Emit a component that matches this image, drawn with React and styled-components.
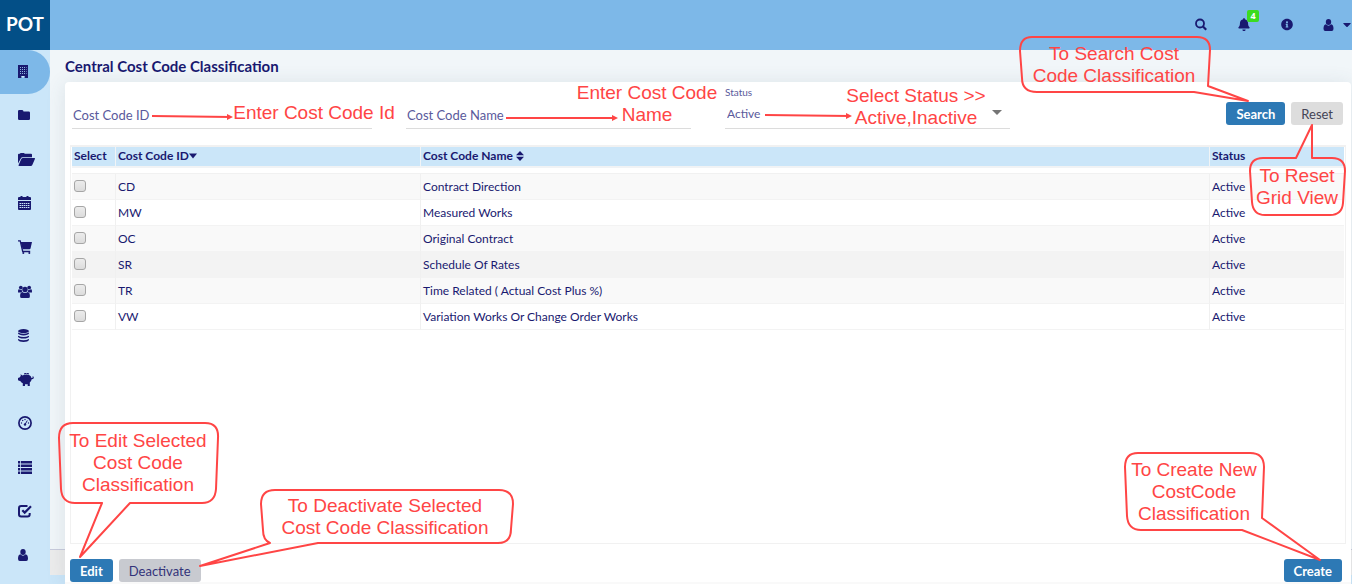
import React from "react";
import styled, { createGlobalStyle, css } from "styled-components";
import { FaBell, FaInfoCircle, FaCaretDown } from "react-icons/fa";

const navy = "#191970";
const red = "#ff4545";
const sky = "#cbe6f9";

const GlobalStyle = createGlobalStyle`
  *, *::before, *::after { box-sizing: border-box; }
  body {
    margin: 0;
    font-family: Lato, "Open Sans", sans-serif;
    font-size: 12px;
    color: ${navy};
  }
  button, input, select { font: inherit; color: inherit; }
`;

const Page = styled.div`
  position: relative;
  display: grid;
  grid-template-columns: 50px minmax(0, 1fr);
  grid-template-rows: 50px 1fr;
  min-height: 100vh;
  overflow: hidden;
`;

const Logo = styled.a`
  display: flex;
  align-items: center;
  justify-content: center;
  padding-bottom: 3px;
  background: #034f87;
  color: #fff;
  font-size: 19px;
  font-weight: 700;
  text-decoration: none;
`;

const TopBar = styled.header`
  display: flex;
  align-items: center;
  justify-content: flex-end;
  padding: 0 1px 1px 0;
  background: #7db8e8;
`;

const TopButton = styled.button`
  position: relative;
  display: flex;
  align-items: center;
  justify-content: center;
  gap: 9px;
  min-width: 43px;
  height: 30px;
  padding: 0;
  border: 0;
  background: none;
  cursor: pointer;
  svg { width: 12px; height: 13px; }
`;

const UserButton = styled(TopButton)`
  padding-left: 14px;
  svg:first-child { width: 11px; height: 12px; }
  svg:last-child { width: 8px; }
`;

const Badge = styled.span`
  position: absolute;
  top: 0;
  right: 6px;
  width: 12px;
  height: 12px;
  border-radius: 2px;
  background: #3bdc1f;
  color: #fff;
  font-family: "Open Sans", sans-serif;
  font-size: 9px;
  font-weight: 700;
  line-height: 11px;
  text-align: center;
`;

const SideNav = styled.nav`
  display: flex;
  flex-direction: column;
  background: ${sky};
`;

const SideLink = styled.a`
  display: flex;
  align-items: center;
  height: 44px;
  padding: 0 0 2px 18px;
  color: ${navy};
  border-radius: 0 22px 22px 0;
  ${(p) => p.$active && css`background: #7db8e8;`}
  svg { width: ${(p) => p.$w}px; height: ${(p) => p.$h}px; }
`;

const Main = styled.main`
  display: flex;
  flex-direction: column;
  padding: 0 1px 0 15px;
  background: linear-gradient(to top, ${sky} 9px, #ececec 9px, #ececec 34px, #c8cbdc 34px, #c8cbdc 35px, #f1f6f9 35px);
`;

const Title = styled.h1`
  margin: 0;
  height: 32px;
  font-size: 15px;
  font-weight: 700;
  line-height: 32px;
`;

const Card = styled.section`
  flex: 1;
  display: flex;
  flex-direction: column;
  border-bottom: 2px solid #f9f9f9;
  border-radius: 4px 4px 0 0;
  background: #fff;
  box-shadow: 0 2px 20px rgba(60, 80, 100, 0.12);
`;

const FilterBar = styled.form`
  display: flex;
  align-items: flex-start;
  justify-content: space-between;
  padding: 4px 8px 16px 7px;
`;

const Fields = styled.div`
  flex: 1;
  max-width: 938px;
  display: grid;
  grid-template-columns: 300fr 285fr 285fr;
  gap: 34px;
`;

const Field = styled.label`
  position: relative;
  display: flex;
  flex-direction: column;
  justify-content: flex-end;
  height: 43px;
  border-bottom: 1px solid #dcdcdc;
  color: #5a5a9c;
`;

const FieldLabel = styled.span`
  font-size: 10px;
  line-height: 12px;
  margin-bottom: 3px;
`;

const control = css`
  width: 100%;
  height: 26px;
  padding: 0 1px;
  border: 0;
  outline: 0;
  background: none;
  font-size: 13px;
  color: #5a5a9c;
`;

const TextInput = styled.input`
  ${control}
  &::placeholder { color: #5a5a9c; opacity: 1; }
`;

const Select = styled.select`
  ${control}
  height: 27px;
  padding: 0 2px 2px;
  font-size: 12px;
  appearance: none;
`;

const SelectArrow = styled.span`
  position: absolute;
  right: 8px;
  bottom: 13px;
  border: 5px solid transparent;
  border-top-color: #757575;
  border-bottom: 0;
  pointer-events: none;
`;

const ButtonGroup = styled.div`
  display: flex;
  gap: 6px;
`;

const FilterButtons = styled(ButtonGroup)`
  margin-top: 16px;
`;

const variants = {
  primary: css`background: #2d79b5; color: #fff; font-weight: 700;`,
  light: css`background: #dddddd; color: #444455;`,
  muted: css`background: #c8cad0; color: #33337a;`,
};

const Button = styled.button`
  height: 23px;
  padding: 0 10px;
  border: 0;
  border-radius: 3px;
  font-size: 13px;
  line-height: 22px;
  cursor: pointer;
  ${(p) => variants[p.$variant]}
`;

const GridBox = styled.div`
  flex: 1;
  margin: 0 5px 0 5px;
  border: 1px solid #f1f1f1;
  border-top-width: 2px;
`;

const Table = styled.table`
  width: 100%;
  table-layout: fixed;
  border-collapse: separate;
  border-spacing: 0;
  padding: 0 1px;
`;

const HeadCell = styled.th`
  height: 21px;
  padding: 0 2px 2px;
  border-right: 1px solid #f1f4f6;
  border-bottom: 2px solid #f1f3f5;
  background: ${sky};
  text-align: left;
  font-weight: 700;
  white-space: nowrap;
  width: ${(p) => p.$width || "auto"};
  &:last-child { border-right: 0; }
`;

const SortMark = styled.svg`
  width: 8px;
  height: 10px;
  vertical-align: -1px;
  ${(p) => p.$spaced && css`margin-left: 3px;`}
`;

const SpacerCell = styled.td`
  height: 6px;
  padding: 0;
  border-bottom: 1px solid #f1f1f1;
`;

const Row = styled.tr`
  background: ${(p) => (p.$hover ? "#f3f3f3" : p.$striped ? "#f9f9f9" : "#fff")};
`;

const Cell = styled.td`
  height: 26px;
  padding: 0 2px 1px;
  border-right: 1px solid #f0f0f0;
  border-bottom: 1px solid #f3f3f3;
  &:last-child { border-right: 0; }
`;

const Check = styled.input`
  appearance: none;
  display: block;
  width: 12px;
  height: 12px;
  margin: 0;
  border: 1px solid #a6a6a6;
  border-radius: 3px;
  background: linear-gradient(#ececec, #dcdcdc);
`;

const Actions = styled.footer`
  display: flex;
  justify-content: space-between;
  padding: 15px 9px 0 5px;
`;

const Note = styled.div`
  position: absolute;
  z-index: 2;
  ${(p) => (p.$right !== undefined ? `right: ${p.$right}px;` : `left: ${p.$left}px;`)}
  ${(p) => (p.$bottom !== undefined ? `bottom: ${p.$bottom}px;` : `top: ${p.$top}px;`)}
  width: ${(p) => p.$w}px;
  height: ${(p) => p.$h}px;
  pointer-events: none;
  svg { position: absolute; inset: 0; width: 100%; height: 100%; }
`;

const NoteText = styled.p`
  position: absolute;
  top: ${(p) => p.$y}px;
  left: ${(p) => p.$x}px;
  width: ${(p) => p.$w}px;
  margin: 0;
  color: ${red};
  font-family: "Liberation Sans", Arial, sans-serif;
  font-size: 19px;
  line-height: 22px;
  text-align: center;
  white-space: pre;
`;

const Building = () => (
  <svg viewBox="0 0 10 13" fill="currentColor" aria-hidden="true">
    <path d="M0 0h10v13H6.500v-2h-3v2H0z" />
    <path d="M2 2.500h6.500M2 4.500h6.500M2 6.500h6.500M2 8.500h6.500" stroke="#8fb4dd" strokeWidth="1" strokeDasharray="1 1" />
    <path d="M3.500 11h3v1.500h-3z" fill={sky} />
  </svg>
);
const Folder = () => (
  <svg viewBox="0 0 12 10" fill="currentColor" aria-hidden="true">
    <path d="M1.300 0h2.900q1.300 0 1.300 1.500h5.200Q12 1.500 12 2.800v5.900Q12 10 10.700 10H1.300Q0 10 0 8.700V1.300Q0 0 1.300 0z" />
  </svg>
);
const FolderOpen = () => (
  <svg viewBox="0 0 17 13" fill="currentColor" aria-hidden="true">
    <path d="M0 10.500V1.800Q0 .8 1 .8h1L2.500 0h3.500l.8.800H13q1 0 1 1v2.400H4.600q-1.300 0-1.800 1.200z" />
    <path d="M4.800 5H16.300q1 0 .6.900l-2.600 6.100q-.4 1-1.500 1H1.200q-1 0-.6-.9L3.300 6q.5-1 1.500-1z" />
  </svg>
);
const Calendar = () => (
  <svg viewBox="0 0 13 14" fill="currentColor" aria-hidden="true">
    <path d="M1 1h1.500V0h2v1h4V0h2v1H12q1 0 1 1v2H0V2q0-1 1-1zM0 5h13v8q0 1-1 1H1q-1 0-1-1z" />
    <path d="M1.500 7.500h10M1.500 9.500h10M1.500 11.500h10" stroke={sky} strokeWidth="1" strokeDasharray="1.500 .6" />
  </svg>
);
const Cart = () => (
  <svg viewBox="0 0 14 14" fill="currentColor" aria-hidden="true">
    <path d="M2.600 1.900H14l-1.500 6.600q-.2.800-1 .8H4.600z" />
    <path d="M0 .8h2.200l2.500 10.700h7.500" fill="none" stroke="currentColor" strokeWidth="1.300" />
    <circle cx="5.300" cy="13" r="1" /><circle cx="11.300" cy="13" r="1" />
  </svg>
);
const Group = () => (
  <svg viewBox="0 0 15 14" fill="currentColor" aria-hidden="true">
    <circle cx="3" cy="2.700" r="2" /><circle cx="12" cy="2.700" r="2" />
    <path d="M0 8V6.200Q0 4.600 1.200 4.600 3 5.600 4 5q0 1.300.6 2L3 8zM15 8V6.200Q15 4.600 13.800 4.600 12 5.600 11 5q0 1.300-.6 2L12 8z" />
    <circle cx="7.500" cy="4.900" r="2.900" />
    <path d="M4.500 7.600Q7.500 9.800 10.500 7.600 12.800 8.200 12.800 12 12.800 14 11 14H4Q2.200 14 2.200 12 2.200 8.200 4.500 7.600z" />
  </svg>
);
const Database = () => (
  <svg viewBox="0 0 12 14" fill="currentColor" aria-hidden="true">
    <ellipse cx="6" cy="2.200" rx="6" ry="2.200" />
    <path d="M0 3.700q6 3 12 0v1.200q-1 2-6 2t-6-2zM0 7.200q6 3 12 0v1.200q-1 2-6 2t-6-2zM0 10.700q6 3 12 0v1.200q-1 2.100-6 2.100t-6-2.100z" />
  </svg>
);
const Piggy = () => (
  <svg viewBox="0 0 16 13" fill="currentColor" aria-hidden="true">
    <path d="M2.500 1.300 4.600 2.500Q6 1.500 8.500 1.500q4.300 0 5 3.500.8.300 1-.3.200-.5-.2-.9l.8-.5q1 .9.600 1.900-.5 1-2 1-.3 1.900-1.900 3.200V13H9.700v-1.800H7V13H4.800V10.300Q3.300 9.500 2.500 8.200L0 7.200V5l1.900-.7q.2-.7.900-1.200z" />
    <path d="M6 .9Q8.500-.5 11 .9" fill="none" stroke="currentColor" strokeWidth="1" />
  </svg>
);
const Gauge = () => (
  <svg viewBox="0 0 14 14" fill="none" stroke="currentColor" aria-hidden="true">
    <circle cx="7" cy="7" r="6.100" strokeWidth="1.700" />
    <path d="M7 8.500 9.300 4.500" strokeWidth="1" />
    <g fill="currentColor" stroke="none">
      <circle cx="7" cy="8.500" r="1.200" /><circle cx="3.500" cy="7" r=".7" />
      <circle cx="4.700" cy="4.500" r=".7" /><circle cx="7" cy="3.500" r=".7" /><circle cx="10.500" cy="7" r=".7" />
    </g>
  </svg>
);
const List = () => (
  <svg viewBox="0 0 14 13" fill="currentColor" aria-hidden="true">
    <path d="M0 0h2.200v2.500H0zM3 0h11v2.500H3zM0 3.500h2.200V6H0zM3 3.500h11V6H3zM0 7h2.200v2.500H0zM3 7h11v2.500H3zM0 10.500h2.200V13H0zM3 10.500h11V13H3z" />
  </svg>
);
const Checked = () => (
  <svg viewBox="0 0 14 14" fill="none" stroke="currentColor" strokeWidth="2" aria-hidden="true">
    <path d="M9.500 2H3.200Q1 2 1 4.200v6Q1 12.500 3.200 12.500h6.300q2.200 0 2.200-2.300V9" />
    <path d="M4.300 6.200 6.700 8.600 13 2.300" strokeWidth="2.200" />
  </svg>
);
const User = () => (
  <svg viewBox="0 0 10 12" fill="currentColor" aria-hidden="true">
    <ellipse cx="5" cy="3" rx="2.700" ry="3" />
    <path d="M2.400 5.300Q5 8 7.600 5.300 10 5.600 10 9.800 10 12 8.200 12H1.800Q0 12 0 9.800 0 5.600 2.400 5.300z" />
  </svg>
);
const Magnifier = () => (
  <svg viewBox="0 0 12 12" fill="none" stroke="currentColor" aria-hidden="true">
    <circle cx="5" cy="5" r="4" strokeWidth="1.800" />
    <path d="M8 8 11.200 11.200" strokeWidth="2.200" />
  </svg>
);

const nav = [
  ["Buildings", Building, 10, 13],
  ["Files", Folder, 12, 10],
  ["Open files", FolderOpen, 17, 13],
  ["Calendar", Calendar, 13, 14],
  ["Purchasing", Cart, 14, 14],
  ["Teams", Group, 14, 13],
  ["Data", Database, 11, 13],
  ["Budget", Piggy, 16, 13],
  ["Dashboard", Gauge, 14, 14],
  ["Lists", List, 14, 13],
  ["Tasks", Checked, 14, 14],
  ["Account", User, 10, 12],
];

const rows = [
  ["CD", "Contract Direction"],
  ["MW", "Measured Works"],
  ["OC", "Original Contract"],
  ["SR", "Schedule Of Rates"],
  ["TR", "Time Related ( Actual Cost Plus %)"],
  ["VW", "Variation Works Or Change Order Works"],
];

function Callout({ box, path, text, textBox, ...pos }) {
  return (
    <Note $w={box[2]} $h={box[3]} {...pos}>
      <svg viewBox={box.join(" ")} fill="none" stroke={red} strokeWidth="2" strokeLinejoin="round" aria-hidden="true">
        <path d={path} />
      </svg>
      <NoteText $x={textBox[0]} $y={textBox[1]} $w={textBox[2]}>{text}</NoteText>
    </Note>
  );
}

function Pointer({ box, from, to, text, textBox, ...pos }) {
  return (
    <Note $w={box[2]} $h={box[3]} {...pos}>
      <svg viewBox={box.join(" ")} aria-hidden="true">
        <path d={`M${from}L${to}`} stroke={red} strokeWidth="2" />
        <path d={`M${to[0] + 2} ${to[1]}l-6-3v6z`} fill={red} />
      </svg>
      <NoteText $x={textBox[0]} $y={textBox[1]} $w={textBox[2]}>{text}</NoteText>
    </Note>
  );
}

export default function App() {
  return (
    <Page>
      <GlobalStyle />
      <Logo href="#">POT</Logo>
      <TopBar>
        <TopButton aria-label="Search"><Magnifier /></TopButton>
        <TopButton aria-label="Notifications"><FaBell /><Badge>4</Badge></TopButton>
        <TopButton aria-label="Information"><FaInfoCircle /></TopButton>
        <UserButton aria-label="Account menu"><User /><FaCaretDown /></UserButton>
      </TopBar>
      <SideNav aria-label="Modules">
        {nav.map(([label, Icon, w, h], i) => (
          <SideLink key={label} href="#" aria-label={label} $active={i === 0} $w={w} $h={h}><Icon /></SideLink>
        ))}
      </SideNav>
      <Main>
        <Title>Central Cost Code Classification</Title>
        <Card>
          <FilterBar onSubmit={(e) => e.preventDefault()}>
            <Fields>
              <Field><TextInput aria-label="Cost Code ID" placeholder="Cost Code ID" /></Field>
              <Field><TextInput aria-label="Cost Code Name" placeholder="Cost Code Name" /></Field>
              <Field>
                <FieldLabel>Status</FieldLabel>
                <Select defaultValue="Active"><option>Active</option><option>Inactive</option></Select>
                <SelectArrow />
              </Field>
            </Fields>
            <FilterButtons>
              <Button $variant="primary">Search</Button>
              <Button type="reset" $variant="light">Reset</Button>
            </FilterButtons>
          </FilterBar>
          <GridBox>
            <Table>
              <thead>
                <tr>
                  <HeadCell $width="44px">Select</HeadCell>
                  <HeadCell $width="305px">
                    Cost Code ID<SortMark viewBox="0 0 8 10" fill="currentColor" aria-hidden="true"><path d="M0 2.500h8L4 7.500z" /></SortMark>
                  </HeadCell>
                  <HeadCell>
                    Cost Code Name<SortMark $spaced viewBox="0 0 8 10" fill="currentColor" aria-hidden="true"><path d="M0 4.300h8L4 0zM0 5.700h8L4 10z" /></SortMark>
                  </HeadCell>
                  <HeadCell $width="134px">Status</HeadCell>
                </tr>
              </thead>
              <tbody>
                <tr><SpacerCell colSpan={4} /></tr>
                {rows.map(([id, name], i) => (
                  <Row key={id} $striped={i % 2 === 0} $hover={id === "SR"}>
                    <Cell><Check type="checkbox" aria-label={`Select ${id}`} /></Cell>
                    <Cell>{id}</Cell>
                    <Cell>{name}</Cell>
                    <Cell>Active</Cell>
                  </Row>
                ))}
              </tbody>
            </Table>
          </GridBox>
          <Actions>
            <ButtonGroup>
              <Button $variant="primary">Edit</Button>
              <Button $variant="muted">Deactivate</Button>
            </ButtonGroup>
            <Button $variant="primary">Create</Button>
          </Actions>
        </Card>
      </Main>

      <Pointer $left={150} $top={95} box={[150, 95, 250, 36]} from={[152, 116]} to={[231, 117]}
        text="Enter Cost Code Id" textBox={[82, 7, 164]} />
      <Pointer $left={504} $top={80} box={[504, 80, 216, 48]} from={[506, 118]} to={[616, 118]}
        text={"Enter Cost Code\nName"} textBox={[72, 2, 142]} />
      <Pointer $left={763} $top={80} box={[763, 80, 226, 50]} from={[765, 115]} to={[850, 116]}
        text={"Select Status >>\nActive,Inactive"} textBox={[82, 5, 142]} />
      <Callout $right={102} $top={34} box={[1018, 34, 232, 70]}
        path="M1032 37H1197Q1210 37 1210 50L1208 86L1248 101L1194 92H1037Q1022 92 1022 78L1020 51Q1020 37 1032 37Z"
        text={"To Search Cost\nCode Classification"} textBox={[5, 9, 182]} />
      <Callout $right={4} $top={122} box={[1248, 122, 100, 96]}
        path="M1263 158H1296L1312 125V158H1332Q1345 158 1345 171L1343 203Q1342 215 1330 215H1265Q1253 215 1252 202L1250 171Q1250 158 1263 158Z"
        text={"To Reset\nGrid View"} textBox={[2, 43, 94]} />
      <Callout $left={57} $bottom={24} box={[57, 420, 164, 140]}
        path="M73 423H205Q219 423 218 438L216 489Q215 503 202 503H130L80 557L102 503H75Q62 503 61 489L59 438Q59 423 73 423Z"
        text={"To Edit Selected\nCost Code\nClassification"} textBox={[5, 10, 152]} />
      <Callout $left={197} $bottom={16} box={[197, 487, 320, 81]}
        path="M275 490H499Q513 490 513 504L511 529Q511 543 498 543H318L200 566L270 543Q263 540 263 530L261 504Q261 490 275 490Z"
        text={"To Deactivate Selected\nCost Code Classification"} textBox={[73, 8, 230]} />
      <Callout $right={28} $bottom={20} box={[1122, 450, 202, 114]}
        path="M1138 453H1250Q1264 453 1264 467L1262 518L1320 560L1242 530H1141Q1128 530 1127 516L1125 467Q1125 453 1138 453Z"
        text={"To Create New\nCostCode\nClassification"} textBox={[3, 9, 138]} />
    </Page>
  );
}
